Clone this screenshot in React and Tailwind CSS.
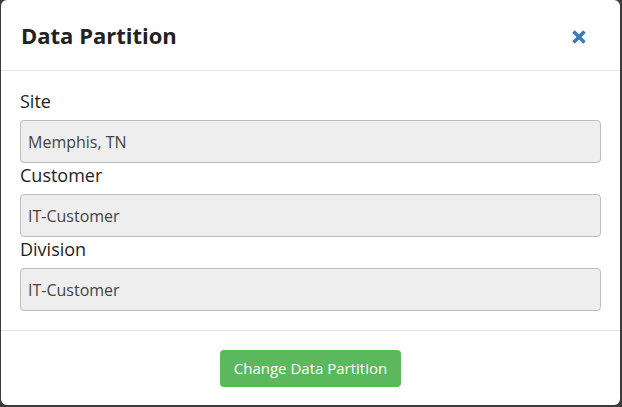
export default function App() {
  const fields = [
    { label: 'Site', value: 'Memphis, TN' },
    { label: 'Customer', value: 'IT-Customer' },
    { label: 'Division', value: 'IT-Customer' },
  ]

  return (
    <div className="h-[407px] w-[622px] bg-[#3c3c3c] pl-[1px]" style={{ fontFamily: '"Open Sans", sans-serif' }}>
      <div className="flex h-[405px] w-[619px] flex-col rounded-[6px] bg-white">
        <header className="flex h-[71px] items-center justify-between border-b border-[#e5e5e5] pl-[20px] pr-[33px]">
          <h1 className="text-[22px] font-bold text-[#222]">Data Partition</h1>
          <button className="mt-[4px] text-[#3a7bbf]">
            <svg width="16" height="16" viewBox="0 0 16 16">
              <path d="M2.5 2.5 L13.5 13.5 M13.5 2.5 L2.5 13.5" stroke="currentColor" strokeWidth="3.6" />
            </svg>
          </button>
        </header>

        <main className="flex flex-col px-[19px] pt-[18px] pb-[19px]">
          {fields.map(f => (
            <div key={f.label} className="flex flex-col">
              <label className="mb-[6px] text-[18px] leading-[25px] text-[#1e1e1e]">{f.label}</label>
              <input
                type="text"
                readOnly
                value={f.value}
                className="box-border h-[43px] w-full rounded-[4px] border border-[#bdbdbd] bg-[#eeeeee] px-[7px] text-[16px] text-[#444] outline-none"
              />
            </div>
          ))}
        </main>

        <footer className="flex flex-1 items-start justify-center border-t border-[#e5e5e5] pt-[19px]">
          <button className="h-[37px] w-[181px] rounded-[4px] bg-[#5cb85c] text-[15px] text-white">
            Change Data Partition
          </button>
        </footer>
      </div>
    </div>
  )
}
